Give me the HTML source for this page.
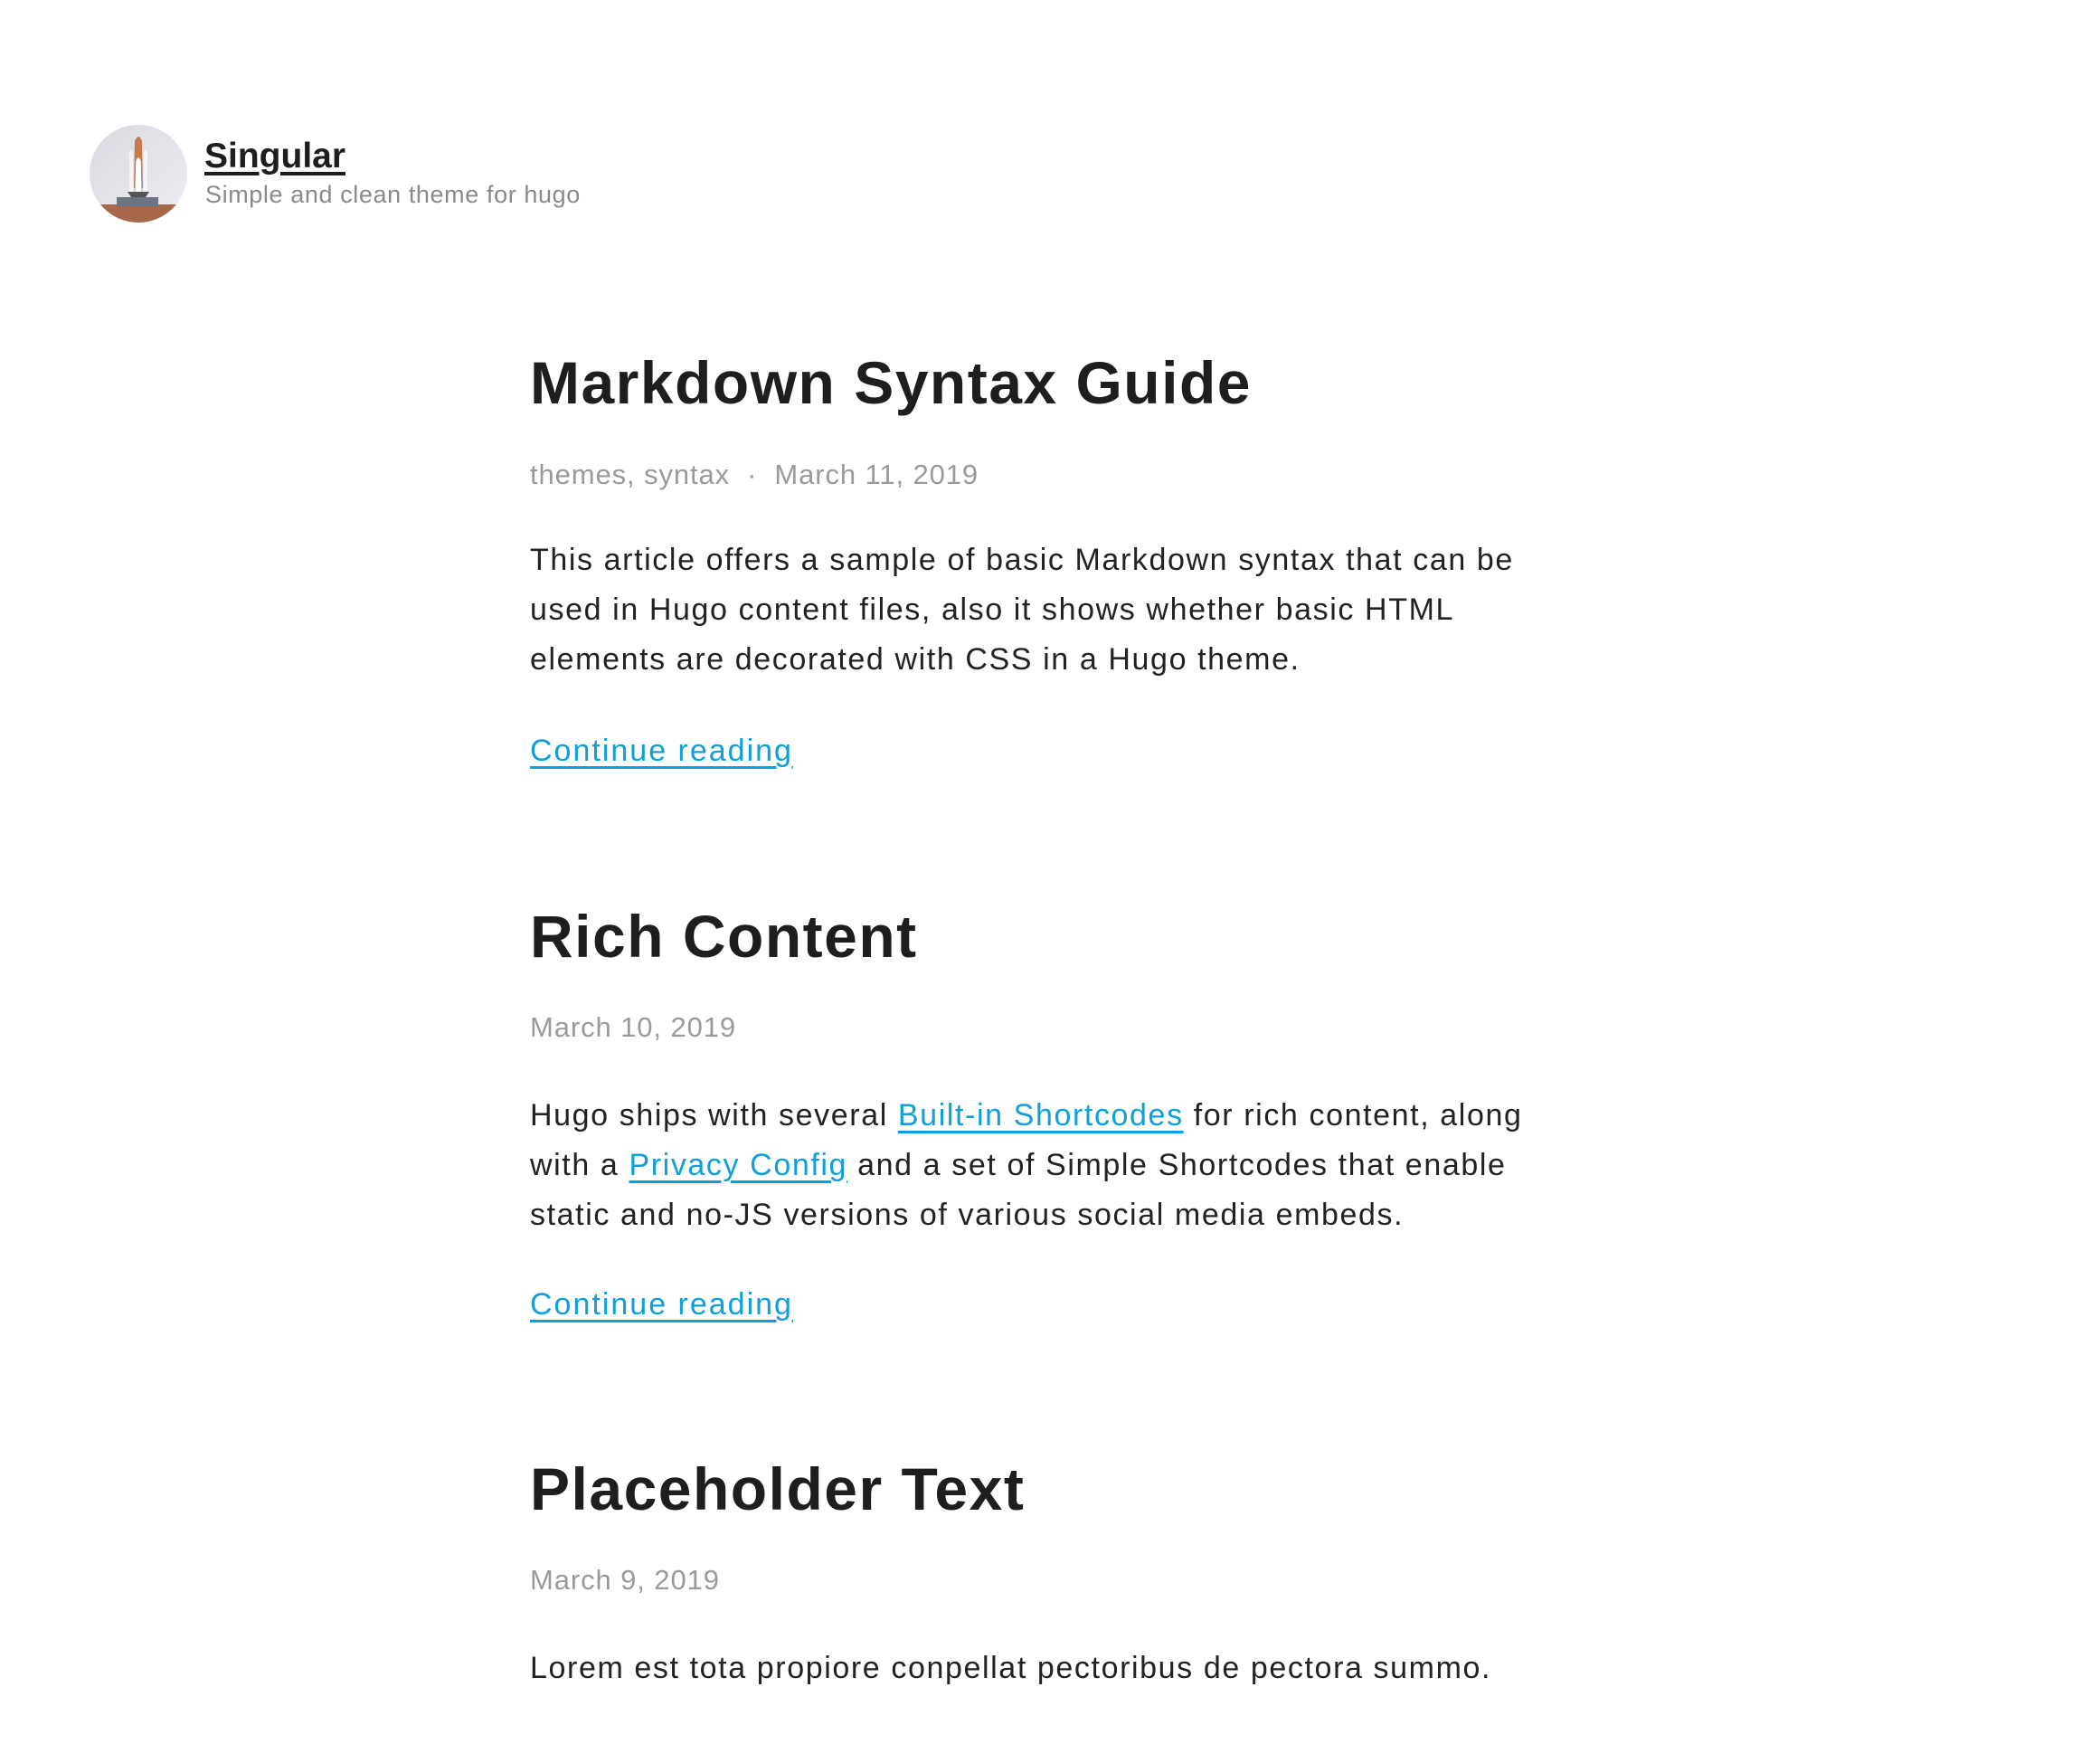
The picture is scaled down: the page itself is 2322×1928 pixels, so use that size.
<!DOCTYPE html>
<html><head><meta charset="utf-8"><style>
html,body{margin:0;padding:0;background:#fff;}
body{width:2322px;height:1928px;position:relative;overflow:hidden;font-family:"Liberation Sans",sans-serif;color:#222;}
.a{position:absolute;white-space:nowrap;}
.t{left:586px;font-size:66px;font-weight:bold;line-height:80px;color:#1e1e1e;letter-spacing:1.5px;}
.m{left:586px;font-size:31px;line-height:40px;color:#9a9a9a;letter-spacing:0.9px;}
.b{left:586px;font-size:34px;line-height:55px;color:#222;letter-spacing:1.6px;}
.c{left:586px;font-size:34px;line-height:50px;color:#0fa0dc;text-decoration:underline;text-decoration-thickness:3px;text-underline-offset:6px;letter-spacing:2px;}
a{color:#0fa0dc;text-decoration:underline;text-decoration-thickness:3px;text-underline-offset:6px;}
</style></head><body>
<div class="a" style="left:99px;top:138px;width:108px;height:108px;border-radius:50%;overflow:hidden;background:linear-gradient(135deg,#d8d8e0,#eeeef3);">
<svg width="108" height="108" viewBox="0 0 108 108">
<rect x="0" y="88" width="108" height="20" fill="#a8674a"/>
<rect x="30" y="80" width="46" height="10" fill="#6b7585"/>
<path d="M50 18 Q54 8 58 18 L59 70 L49 70 Z" fill="#c87a4a"/>
<path d="M44 30 Q46 26 48 30 L48 78 L44 78 Z" fill="#f4f4f4"/>
<path d="M60 30 Q62 26 64 30 L64 78 L60 78 Z" fill="#f4f4f4"/>
<path d="M51 40 Q54 32 57 40 L58 78 L50 78 Z" fill="#fff" stroke="#888" stroke-width="0.5"/>
<path d="M42 74 L66 74 L62 80 L46 80 Z" fill="#555"/>
</svg></div>
<div class="a" style="left:226px;top:149px;font-size:39px;font-weight:bold;line-height:48px;color:#1e1e1e;text-decoration:underline;text-decoration-thickness:4px;text-underline-offset:5px;">Singular</div>
<div class="a" style="left:227px;top:198px;font-size:27px;line-height:34px;color:#8a8a8a;letter-spacing:0.6px;">Simple and clean theme for hugo</div>

<div class="a t" style="top:383px;">Markdown Syntax Guide</div>
<div class="a m" style="top:505px;">themes, syntax &nbsp;·&nbsp; March 11, 2019</div>
<div class="a b" style="top:592px;">This article offers a sample of basic Markdown syntax that can be<br>used in Hugo content files, also it shows whether basic HTML<br>elements are decorated with CSS in a Hugo theme.</div>
<div class="a c" style="top:805px;">Continue reading</div>

<div class="a t" style="top:995px;">Rich Content</div>
<div class="a m" style="top:1116px;">March 10, 2019</div>
<div class="a b" style="top:1206px;">Hugo ships with several <a>Built-in Shortcodes</a> for rich content, along<br>with a <a>Privacy Config</a> and a set of Simple Shortcodes that enable<br>static and no-JS versions of various social media embeds.</div>
<div class="a c" style="top:1417px;">Continue reading</div>

<div class="a t" style="top:1606px;">Placeholder Text</div>
<div class="a m" style="top:1727px;">March 9, 2019</div>
<div class="a b" style="top:1817px;">Lorem est tota propiore conpellat pectoribus de pectora summo.</div>
</body></html>
